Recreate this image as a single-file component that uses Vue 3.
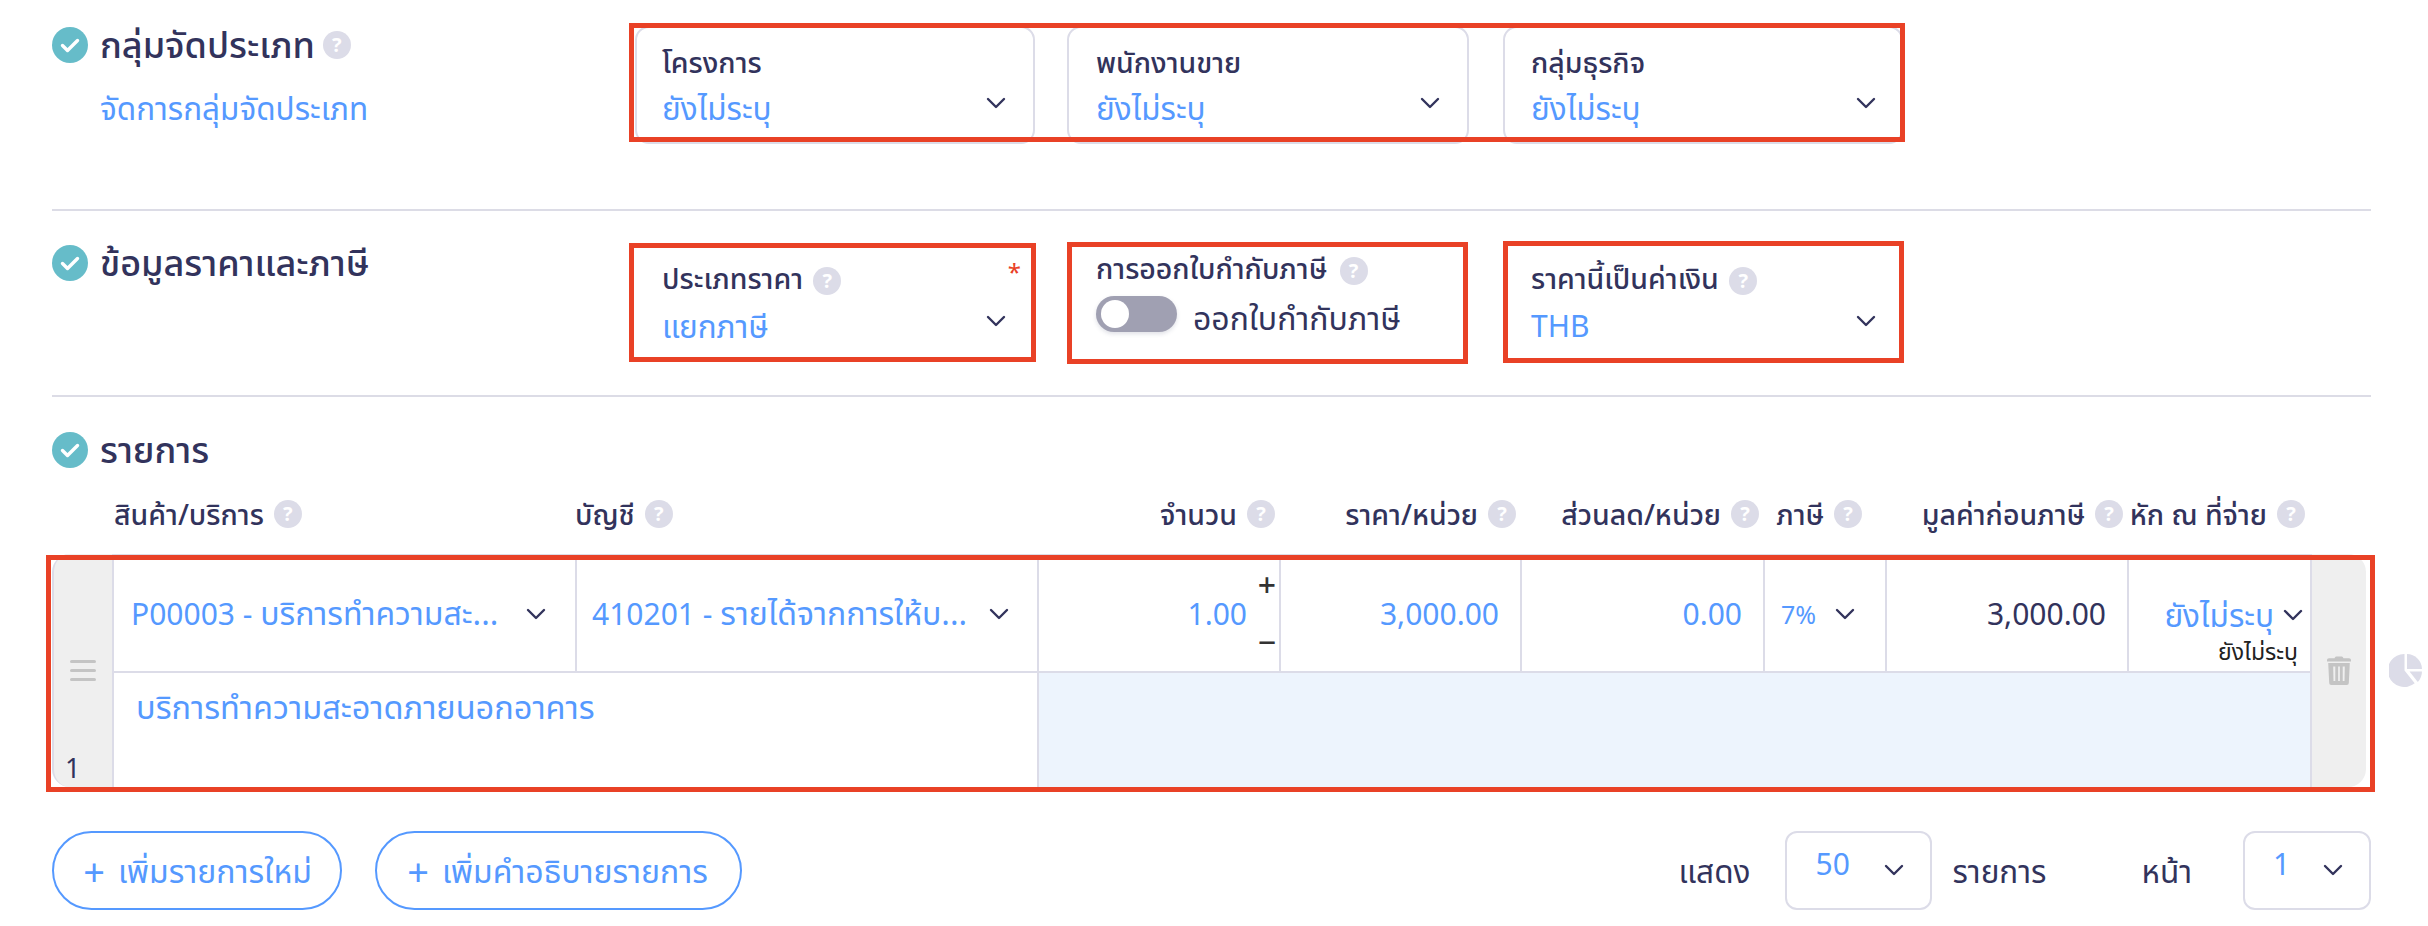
<script setup>
const groupCards = ['โครงการ', 'พนักงานขาย', 'กลุ่มธุรกิจ']

const headers = [
  { label: 'สินค้า/บริการ', cls: 'left' },
  { label: 'บัญชี', cls: 'left' },
  { label: 'จำนวน', cls: '' },
  { label: 'ราคา/หน่วย', cls: '' },
  { label: 'ส่วนลด/หน่วย', cls: '' },
  { label: 'ภาษี', cls: 'tax' },
  { label: 'มูลค่าก่อนภาษี', cls: '' },
  { label: 'หัก ณ ที่จ่าย', cls: '' }
]
</script>

<template>
  <div class="page">
    <section class="section first">
      <div>
        <div class="title">
          <span class="check">
            <svg width="36" height="36" viewBox="0 0 36 36"><path d="M10.500 18.500l5 5L25.500 13.500" fill="none" stroke="#fff" stroke-width="3.400" stroke-linecap="round" stroke-linejoin="round" /></svg>
          </span>
          <h2>กลุ่มจัดประเภท</h2>
          <span class="help title-help">?</span>
        </div>
        <a class="manage">จัดการกลุ่มจัดประเภท</a>
      </div>
      <div class="cards">
        <div v-for="name in groupCards" :key="name" class="card">
          <div class="label">{{ name }}</div>
          <div class="value">
            <span>ยังไม่ระบุ</span>
            <svg class="chev" width="20" height="12" viewBox="0 0 20 12"><path d="M2 2l8 8 8-8" fill="none" stroke="#32335c" stroke-width="2.400" stroke-linecap="round" stroke-linejoin="round" /></svg>
          </div>
        </div>
        <i class="mark mark-row"></i>
      </div>
    </section>

    <section class="section second">
      <div class="title">
        <span class="check">
          <svg width="36" height="36" viewBox="0 0 36 36"><path d="M10.500 18.500l5 5L25.500 13.500" fill="none" stroke="#fff" stroke-width="3.400" stroke-linecap="round" stroke-linejoin="round" /></svg>
        </span>
        <h2>ข้อมูลราคาและภาษี</h2>
      </div>
      <div class="cards">
        <div class="card plain">
          <span class="required">*</span>
          <div class="label">ประเภทราคา <span class="help">?</span></div>
          <div class="value">
            <span>แยกภาษี</span>
            <svg class="chev" width="20" height="12" viewBox="0 0 20 12"><path d="M2 2l8 8 8-8" fill="none" stroke="#32335c" stroke-width="2.400" stroke-linecap="round" stroke-linejoin="round" /></svg>
          </div>
          <i class="mark mark-a"></i>
        </div>
        <div class="card plain switch-card">
          <div class="label">การออกใบกำกับภาษี <span class="help">?</span></div>
          <div class="switch-row">
            <span class="switch"><span class="knob"></span></span>
            <span class="switch-text">ออกใบกำกับภาษี</span>
          </div>
          <i class="mark mark-b"></i>
        </div>
        <div class="card plain">
          <div class="label">ราคานี้เป็นค่าเงิน <span class="help">?</span></div>
          <div class="value">
            <span class="latin">THB</span>
            <svg class="chev" width="20" height="12" viewBox="0 0 20 12"><path d="M2 2l8 8 8-8" fill="none" stroke="#32335c" stroke-width="2.400" stroke-linecap="round" stroke-linejoin="round" /></svg>
          </div>
          <i class="mark mark-c"></i>
        </div>
      </div>
    </section>

    <section class="items">
      <div class="title">
        <span class="check">
          <svg width="36" height="36" viewBox="0 0 36 36"><path d="M10.500 18.500l5 5L25.500 13.500" fill="none" stroke="#fff" stroke-width="3.400" stroke-linecap="round" stroke-linejoin="round" /></svg>
        </span>
        <h2>รายการ</h2>
      </div>

      <div class="columns head">
        <div v-for="h in headers" :key="h.label" class="th" :class="h.cls">
          {{ h.label }} <span class="help">?</span>
        </div>
      </div>

      <div class="line">
        <div class="grip">
          <span class="bars"><b></b><b></b><b></b></span>
          <span class="num">1</span>
        </div>
        <div class="cells">
          <div class="columns row">
            <div class="cell pick">
              <span class="ell"><span class="latin">P00003 - </span>บริการทำความสะ...</span>
              <svg width="20" height="12" viewBox="0 0 20 12"><path d="M2 2l8 8 8-8" fill="none" stroke="#32335c" stroke-width="2.400" stroke-linecap="round" stroke-linejoin="round" /></svg>
            </div>
            <div class="cell pick">
              <span class="ell"><span class="latin">410201 - </span>รายได้จากการให้บ...</span>
              <svg width="20" height="12" viewBox="0 0 20 12"><path d="M2 2l8 8 8-8" fill="none" stroke="#32335c" stroke-width="2.400" stroke-linecap="round" stroke-linejoin="round" /></svg>
            </div>
            <div class="cell qty">
              <span class="latin">1.00</span>
              <span class="steps"><span>+</span><span>−</span></span>
            </div>
            <div class="cell amount">3,000.00</div>
            <div class="cell amount">0.00</div>
            <div class="cell taxcell">
              <span>7%</span>
              <svg width="20" height="12" viewBox="0 0 20 12"><path d="M2 2l8 8 8-8" fill="none" stroke="#32335c" stroke-width="2.400" stroke-linecap="round" stroke-linejoin="round" /></svg>
            </div>
            <div class="cell amount dark">3,000.00</div>
            <div class="cell wht">
              <div class="wht-top">
                <span>ยังไม่ระบุ</span>
                <svg width="20" height="12" viewBox="0 0 20 12"><path d="M2 2l8 8 8-8" fill="none" stroke="#32335c" stroke-width="2.400" stroke-linecap="round" stroke-linejoin="round" /></svg>
              </div>
              <div class="wht-sub">ยังไม่ระบุ</div>
            </div>
          </div>
          <div class="desc-row">
            <div class="desc">บริการทำความสะอาดภายนอกอาคาร</div>
            <div class="fill"></div>
          </div>
        </div>
        <div class="trash">
          <svg width="24" height="29" viewBox="0 0 24 29">
            <path d="M7.500 2.200C8 .8 9 .4 10 .4h4c1 0 2 .4 2.500 1.800H22c1.200 0 2 .8 2 2v1.400H0V4.200c0-1.200.8-2 2-2z" fill="#c4c4c4" />
            <path fill-rule="evenodd" d="M1.200 7h21.600l-1 20a2 2 0 0 1-2 2H4.200a2 2 0 0 1-2-2zM6.200 10.500l.3 14.500h1.800V10.500zm4.900 0V25h1.800V10.500zm4.600 0V25h1.800l.3-14.500z" fill="#c4c4c4" />
          </svg>
        </div>
        <svg class="pie" width="33" height="33" viewBox="0 0 33 33">
          <path d="M15.500 0v16.500l10.200 12.800A16.500 16.500 0 1 1 15.500 0z" fill="#dcdce8" />
          <path d="M18 0a15.500 15.500 0 0 1 15 15H18z" fill="#dcdce8" />
          <path d="M20.500 17.500H33a16 16 0 0 1-4.200 10.500z" fill="#dcdce8" />
        </svg>
        <i class="mark mark-line"></i>
      </div>

      <div class="foot">
        <div class="buttons">
          <button class="btn short"><span class="plus">+</span>เพิ่มรายการใหม่</button>
          <button class="btn long"><span class="plus">+</span>เพิ่มคำอธิบายรายการ</button>
        </div>
        <div class="pager">
          <span>แสดง</span>
          <div class="select wide">
            <span>50</span>
            <svg width="20" height="12" viewBox="0 0 20 12"><path d="M2 2l8 8 8-8" fill="none" stroke="#32335c" stroke-width="2.400" stroke-linecap="round" stroke-linejoin="round" /></svg>
          </div>
          <span class="pager-items">รายการ</span>
          <span>หน้า</span>
          <div class="select narrow">
            <span>1</span>
            <svg width="20" height="12" viewBox="0 0 20 12"><path d="M2 2l8 8 8-8" fill="none" stroke="#32335c" stroke-width="2.400" stroke-linecap="round" stroke-linejoin="round" /></svg>
          </div>
        </div>
      </div>
    </section>
  </div>
</template>

<style>
html, body {
  background: #fff;
}
</style>

<style scoped>
.page {
  width: 2428px;
  height: 926px;
  overflow: hidden;
  padding: 0 57px 0 52px;
  box-sizing: border-box;
  font-family: "Noto Sans", "Noto Sans Thai", "DejaVu Sans", sans-serif;
  color: #32335c;
  font-size: 31.500px;
  line-height: 40px;
}

.section {
  display: grid;
  grid-template-columns: 583px 1fr;
  border-bottom: 2px solid #dcdce6;
  box-sizing: border-box;
}

.first {
  height: 211px;
  padding-top: 27px;
}

.second {
  height: 186px;
  padding-top: 33px;
}

.second .title {
  margin-top: 1px;
}

.title {
  display: flex;
  align-items: center;
  gap: 12px;
  height: 36px;
}

.title h2 {
  margin: 0;
  font-size: 36px;
  font-weight: 500;
  line-height: 36px;
}

.check {
  width: 36px;
  height: 36px;
  border-radius: 50%;
  background: #66bcc9;
  display: flex;
  align-items: center;
  justify-content: center;
  flex: none;
}

.help {
  display: inline-flex;
  align-items: center;
  justify-content: center;
  width: 28px;
  height: 28px;
  border-radius: 50%;
  background: #dcdce8;
  color: #fff;
  font-size: 20px;
  font-weight: 700;
  line-height: 28px;
  vertical-align: middle;
  flex: none;
}

.title-help {
  margin-left: -4px;
}

.label .help {
  margin-left: 3px;
}

.switch-card .label .help {
  margin-left: 5px;
}

.manage {
  display: block;
  margin: 25px 0 0 48px;
  color: #5599ff;
  font-size: 31.500px;
}

.latin {
  font-size: 30px;
}

.cards {
  display: grid;
  grid-template-columns: 400px 400px 400px;
  column-gap: 34px;
  align-self: start;
  position: relative;
  width: 1268px;
}

.card {
  position: relative;
  height: 117px;
  box-sizing: border-box;
  border: 2px solid #dcdce8;
  border-radius: 14px;
  padding: 16px 0 0 25px;
}

.card:nth-child(2) {
  margin-left: -2px;
  padding-left: 27px;
}

.card:nth-child(3) {
  padding-left: 26px;
}

.card:nth-child(3) .value {
  padding-right: 25px;
}

.first .card {
  margin-top: -1px;
  height: 118px;
}

.card.plain {
  border-color: transparent;
}

.label {
  font-size: 28.500px;
  font-weight: 500;
  line-height: 36px;
  height: 36px;
  white-space: nowrap;
}

.second .label {
  margin-top: -2px;
}

.value {
  display: flex;
  justify-content: space-between;
  align-items: center;
  color: #5599ff;
  line-height: 40px;
  margin-top: 8px;
  padding-right: 27px;
}

.second .value {
  margin-top: 10px;
}

.chev {
  margin-top: -10px;
}

.required {
  position: absolute;
  top: 6px;
  right: 12px;
  color: #e94126;
  font-size: 24px;
}

.second .switch-card .label {
  margin-top: -12px;
}

.switch-row {
  display: flex;
  align-items: center;
  gap: 16px;
  margin-top: 10px;
  height: 36px;
}

.switch-text {
  font-size: 32px;
  padding-top: 8px;
}

.switch {
  display: block;
  flex: none;
  width: 81px;
  height: 36px;
  border-radius: 18px;
  background: #a0a0b2;
  box-shadow: 0 2px 4px rgba(50, 51, 92, 0.15);
  position: relative;
}

.knob {
  position: absolute;
  left: 5px;
  top: 4px;
  width: 28px;
  height: 28px;
  border-radius: 50%;
  background: #fff;
}

.mark {
  position: absolute;
  box-sizing: border-box;
  border: 5px solid #e94126;
  pointer-events: none;
}

.mark-row { inset: -4px -2px 2px -6px; }
.mark-a { inset: -3px -3px -3px -8px; }
.mark-b { inset: -4px -1px -5px -2px; }
.mark-c { inset: -5px -3px -4px -2px; }

.items {
  padding-top: 35px;
  position: relative;
}

.columns {
  display: grid;
  grid-template-columns: 463px 462px 242px 241px 243px 122px 242px 181px;
}

.head {
  grid-template-columns: 461px 463px 242px 241px 243px 122px 242px 182px;
  margin: 28px 0 0 62px;
  height: 58px;
  align-items: start;
}

.th {
  display: flex;
  align-items: center;
  justify-content: flex-end;
  gap: 10px;
  height: 36px;
  padding-right: 5px;
  font-size: 28.500px;
  font-weight: 500;
  white-space: nowrap;
}

.th.left {
  justify-content: flex-start;
}

.th.tax {
  padding-right: 24px;
}

.line {
  position: relative;
  display: flex;
  height: 233px;
}

.grip {
  width: 62px;
  box-sizing: border-box;
  background: #efefef;
  border: 2px solid #dcdce8;
  border-width: 0 2px 0 2px;
  border-radius: 18px 0 0 18px;
  position: relative;
  display: flex;
  align-items: center;
  justify-content: center;
}

.bars {
  display: flex;
  flex-direction: column;
  gap: 6px;
  width: 26px;
}

.bars b {
  display: block;
  height: 3px;
  border-radius: 2px;
  background: #c4c4c4;
}

.num {
  position: absolute;
  left: 11px;
  bottom: -1px;
  font-size: 27px;
}

.cells {
  width: 2196px;
  border-top: 2px solid #dcdce6;
  box-sizing: border-box;
}

.row {
  height: 115px;
  border-bottom: 2px solid #dcdce8;
  box-sizing: content-box;
}

.cell {
  border-right: 2px solid #dcdce8;
  box-sizing: border-box;
  color: #5599ff;
  display: flex;
  align-items: center;
  min-width: 0;
}

.cell.pick {
  justify-content: space-between;
  padding: 0 29px 0 17px;
  font-size: 32px;
}

.cell.pick + .cell.pick {
  padding: 0 28px 0 15px;
}

.ell {
  white-space: nowrap;
}

.qty {
  justify-content: flex-end;
  gap: 8px;
}

.steps {
  display: flex;
  flex-direction: column;
  gap: 23px;
  color: #333;
  width: 24px;
  align-items: center;
  font-size: 32px;
  font-weight: 500;
  line-height: 34px;
}

.amount {
  justify-content: flex-end;
  padding-right: 21px;
  font-size: 30px;
}

.dark {
  color: #32335c;
}

.taxcell {
  font-size: 25px;
  gap: 19px;
  padding-left: 16px;
}

.wht {
  flex-direction: column;
  align-items: flex-end;
  padding: 39px 7px 0 0;
  border-right: 0;
}

.wht-top {
  display: flex;
  align-items: center;
  gap: 9px;
}

.wht-sub {
  color: #222;
  font-size: 23px;
  line-height: 33px;
  padding-right: 5px;
}

.desc-row {
  display: flex;
  height: 114px;
}

.desc {
  width: 925px;
  box-sizing: border-box;
  border-right: 2px solid #dcdce8;
  padding: 14px 0 0 22px;
  color: #5599ff;
  font-size: 32.500px;
}

.fill {
  flex: 1;
  background: #edf4fd;
}

.trash {
  width: 56px;
  background: #efefef;
  border-left: 2px solid #dcdce8;
  box-sizing: border-box;
  border-radius: 0 18px 18px 0;
  display: flex;
  align-items: center;
  justify-content: center;
}

.pie {
  position: absolute;
  left: 2337px;
  top: 100px;
}

.mark-line {
  inset: 1px -4px -5px -6px;
}

.foot {
  display: flex;
  justify-content: space-between;
  margin-top: 44px;
}

.buttons {
  display: flex;
  gap: 33px;
}

.btn {
  height: 79px;
  box-sizing: border-box;
  border: 2px solid #5599ff;
  border-radius: 40px;
  background: #fff;
  color: #5599ff;
  font: inherit;
  font-size: 32px;
  display: flex;
  align-items: center;
  gap: 12px;
  padding: 0 0 0 28px;
}

.long {
  padding-left: 29px;
}

.short { width: 290px; }
.long { width: 367px; }

.plus {
  font-size: 38px;
  width: 24px;
}

.pager {
  display: flex;
  align-items: center;
}

.select {
  height: 79px;
  box-sizing: border-box;
  border: 2px solid #dcdce8;
  border-radius: 12px;
  display: flex;
  justify-content: space-between;
  color: #5599ff;
  font-size: 30px;
  padding: 0 26px 0 28px;
  margin-left: 35px;
  line-height: 62px;
}

.select svg {
  margin-top: 31px;
}

.wide { width: 147px; }
.narrow { width: 128px; margin-left: 51px; }

.pager-items {
  margin: 0 95px 0 20px;
}
</style>
